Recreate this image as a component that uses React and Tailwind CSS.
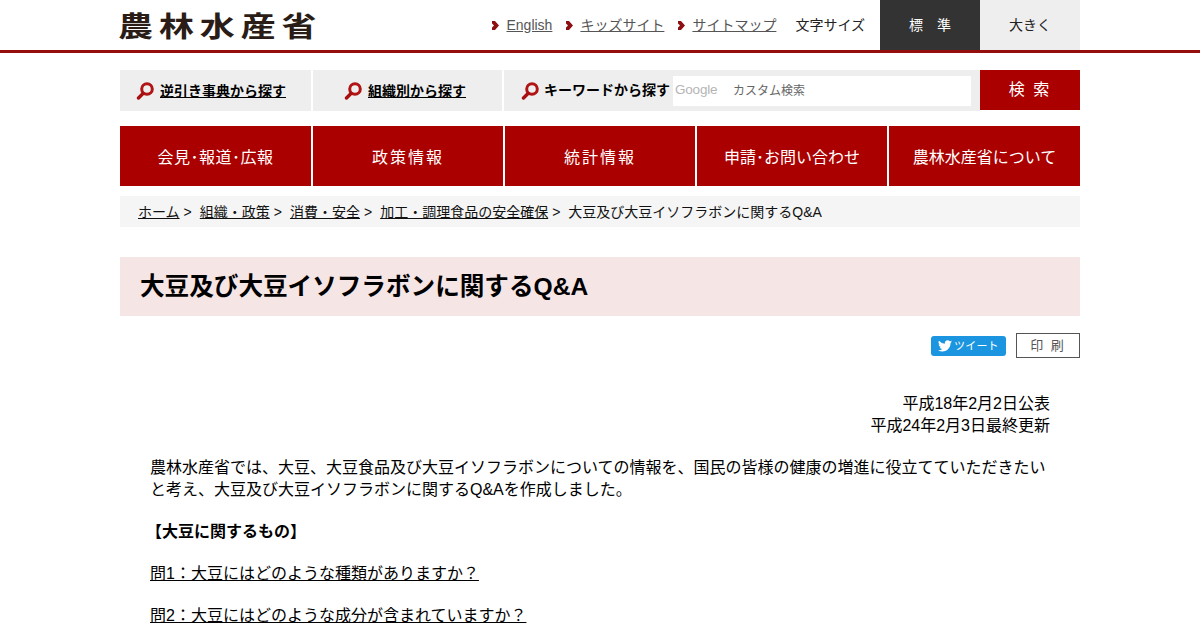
import React from "react";

const FONT = "font-['Liberation_Sans','Noto_Sans_CJK_JP',sans-serif]";

function Mag({ className = "" }) {
  return (
    <svg width="18" height="18" viewBox="0 0 18 18" className={className}>
      <circle cx="11" cy="7" r="5.3" fill="none" stroke="#b01414" strokeWidth="3" />
      <path d="M7 11.5 L2.5 16" stroke="#a80f0f" strokeWidth="3.4" strokeLinecap="round" />
    </svg>
  );
}

function Arrow() {
  return (
    <svg width="7" height="9" viewBox="0 0 7 9" className="mr-[7px] shrink-0">
      <path d="M0 0 L3 0 L7 4.5 L3 9 L0 9 L0 6.5 L2 4.5 L0 2.5 Z" fill="#8c0f12" />
    </svg>
  );
}

function TopLink({ children, className = "" }) {
  return (
    <span className={`flex items-center ${className}`}>
      <Arrow />
      <a className="text-[14px] text-[#555] underline">{children}</a>
    </span>
  );
}

function Crumb({ children }) {
  return (
    <>
      <a className="underline">{children}</a>
      <span className="ml-[4px] mr-[8px]">&gt;</span>
    </>
  );
}

const NAV = [
  ["会見･報道･広報", "w-[191px] tracking-[0.5px]"],
  ["政策情報", "w-[190px] tracking-[2px]"],
  ["統計情報", "w-[190px] tracking-[2px]"],
  ["申請･お問い合わせ", "w-[190px]"],
  ["農林水産省について", "w-[191px]"],
];

export default function App() {
  return (
    <div className={`${FONT} h-[630px] overflow-hidden bg-white text-black`}>
      <header className="h-[53px] border-b-[3px] border-[#960d0d]">
        <div className="mx-auto flex h-[50px] w-[960px] items-center justify-between">
          <div className="-ml-[2px] origin-left scale-x-[1.25] whitespace-nowrap text-[28px] font-bold leading-[34px] tracking-[4.7px] text-[#2a1c16] font-['Noto_Sans_CJK_JP',sans-serif]">
            農林水産省
          </div>
          <div className="flex h-full items-center">
            <TopLink className="mr-[14px]">English</TopLink>
            <TopLink className="mr-[14px]">キッズサイト</TopLink>
            <TopLink className="mr-[19px]">サイトマップ</TopLink>
            <span className="mr-[15px] text-[14px] text-[#222]">文字サイズ</span>
            <div className="flex h-full w-[100px] items-center justify-center bg-[#333] text-[14px] text-white">標　準</div>
            <div className="flex h-full w-[100px] items-center justify-center bg-[#eee] text-[14px] text-[#222]">大きく</div>
          </div>
        </div>
      </header>

      <div className="mx-auto w-[960px]">
        <div className="mt-[17px] flex h-[41px]">
          <div className="mr-[2px] flex w-[191px] items-center bg-[#eee] pl-[16px]">
            <Mag className="mr-[6px]" />
            <a className="mt-[2px] text-[14px] font-bold underline">逆引き事典から探す</a>
          </div>
          <div className="mr-[2px] flex w-[189px] items-center bg-[#eee] pl-[31px]">
            <Mag className="mr-[6px]" />
            <a className="mt-[2px] text-[14px] font-bold underline">組織別から探す</a>
          </div>
          <div className="flex w-[476px] items-center bg-[#eee] pl-[17px]">
            <Mag className="mr-[5px] shrink-0" />
            <span className="whitespace-nowrap text-[14px] font-bold">キーワードから探す</span>
            <div className="ml-[3px] flex h-[30px] w-[298px] items-center bg-white pl-[2px] text-[12px] text-[#666]">
              <span className="w-[58px] text-[13.5px] tracking-[-0.2px] text-[#b5b5b5]">Google</span>
              <span>カスタム検索</span>
            </div>
          </div>
          <div className="flex h-[40px] w-[100px] items-center justify-center bg-[#ab0000] text-[16px] tracking-[2px] text-white">検 索</div>
        </div>

        <nav className="mt-[15px] flex h-[60px] gap-[2px]">
          {NAV.map(([t, c]) => (
            <a key={t} className={`flex h-full items-center justify-center whitespace-nowrap bg-[#ab0000] pt-[3px] text-[16px] text-white ${c}`}>
              {t}
            </a>
          ))}
        </nav>

        <div className="mt-[10px] flex h-[31px] items-center bg-[#f5f5f5] pl-[18px] pt-[2px] text-[14px] text-[#111]">
          <Crumb>ホーム</Crumb>
          <Crumb>組織・政策</Crumb>
          <Crumb>消費・安全</Crumb>
          <Crumb>加工・調理食品の安全確保</Crumb>
          <span>大豆及び大豆イソフラボンに関するQ&amp;A</span>
        </div>

        <h1 className="mt-[30px] flex h-[59px] items-center bg-[#f6e5e5] pl-[20px] pt-[2px] text-[24.6px] font-bold">
          大豆及び大豆イソフラボンに関するQ&amp;A
        </h1>

        <div className="mt-[17px] flex h-[25px] items-center justify-end">
          <a className="mr-[10px] flex h-[20px] w-[75px] items-center rounded-[3px] bg-[#1b95e0] pl-[7px] text-[11px] text-white">
            <svg width="14" height="12" viewBox="0 0 24 20" className="mr-[2px]">
              <path fill="#fff" d="M24 2.4a9.8 9.8 0 0 1-2.8.8A4.9 4.9 0 0 0 23.3.5a9.8 9.8 0 0 1-3.1 1.2A4.9 4.9 0 0 0 11.8 6 13.9 13.9 0 0 1 1.7.9a4.9 4.9 0 0 0 1.5 6.6 4.9 4.9 0 0 1-2.2-.6 4.9 4.9 0 0 0 3.9 4.9 4.9 4.9 0 0 1-2.2.1 4.9 4.9 0 0 0 4.6 3.4A9.9 9.9 0 0 1 0 17.3 13.9 13.9 0 0 0 7.5 19.5c9.1 0 14.3-7.7 14-14.6A10 10 0 0 0 24 2.4z" />
            </svg>
            <span className="mt-[2px] tracking-[0.2px]">ツイート</span>
          </a>
          <a className="flex h-[25px] w-[64px] items-center justify-center border border-[#555] text-[13px] tracking-[2px] text-[#555]">印 刷</a>
        </div>

        <main className="px-[30px] pt-[35px] text-[16px] leading-[22px]">
          <p className="text-right">平成18年2月2日公表<br />平成24年2月3日最終更新</p>
          <p className="mt-[20px]">農林水産省では、大豆、大豆食品及び大豆イソフラボンについての情報を、国民の皆様の健康の増進に役立てていただきたいと考え、大豆及び大豆イソフラボンに関するQ&amp;Aを作成しました。</p>
          <p className="-ml-[4px] mt-[20px] font-bold">【大豆に関するもの】</p>
          <p className="mt-[20px]"><a className="underline">問1：大豆にはどのような種類がありますか？</a></p>
          <p className="mt-[20px]"><a className="underline">問2：大豆にはどのような成分が含まれていますか？</a></p>
        </main>
      </div>
    </div>
  );
}
